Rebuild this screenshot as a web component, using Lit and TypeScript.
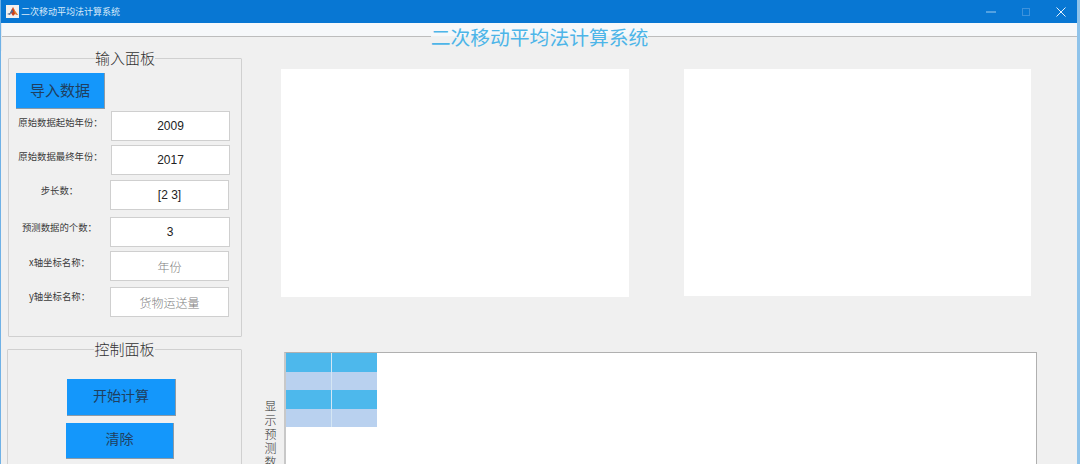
import { LitElement, html, css } from "lit";
import { customElement } from "lit/decorators.js";

const FIELDS = [
  { cls: "r1", label: "原始数据起始年份：", value: "2009", muted: false },
  { cls: "r2", label: "原始数据最终年份：", value: "2017", muted: false },
  { cls: "r3", label: "步长数：", value: "[2 3]", muted: false },
  { cls: "r4", label: "预测数据的个数：", value: "3", muted: false },
  { cls: "r5", label: "x轴坐标名称：", value: "年份", muted: true },
  { cls: "r6", label: "y轴坐标名称：", value: "货物运送量", muted: true },
];

@customElement("app-root")
export class AppRoot extends LitElement {
  static styles = css`
    :host {
      display: block;
      width: 1080px;
      height: 464px;
      overflow: hidden;
      background: #f0f0f0;
      font-family: "Liberation Sans", "Noto Sans CJK SC", sans-serif;
      color: #333;
    }
    .window {
      height: 464px;
      display: flex;
      flex-direction: column;
      border-left: 1px solid #6fb1e6;
      border-right: 3px solid #8fc3ea;
      box-sizing: border-box;
      overflow: hidden;
    }
    .titlebar {
      height: 23px;
      flex: none;
      margin: 0 -3px 0 -1px;
      background: #0877d3;
      display: flex;
      align-items: center;
      padding-left: 6px;
      color: #d8ebfa;
      font: 9px "Noto Sans CJK SC", sans-serif;
    }
    .app-icon {
      width: 13px;
      height: 13px;
      margin-right: 2px;
    }
    .controls {
      margin-left: auto;
      margin-right: 2px;
      display: flex;
      align-items: center;
    }
    .ctl {
      width: 35px;
      display: flex;
      justify-content: center;
    }
    .ctl svg {
      width: 10px;
      height: 10px;
      display: block;
    }
    .heading {
      height: 28px;
      flex: none;
      display: flex;
      align-items: center;
      background: linear-gradient(#f6f8fa 0 13px, #f0f0f0 13px);
      border-left: 1px solid #e4e9ee;
    }
    .rule {
      flex: 1;
      height: 1px;
      margin-bottom: 1px;
      background: #bdbdbd;
    }
    .heading h1 {
      margin: 0;
      font: 400 19.8px/28px "Noto Sans CJK SC", sans-serif;
      color: #4db5e8;
      white-space: nowrap;
    }
    .body {
      flex: 1;
      display: flex;
      min-height: 0;
      margin-top: -3px;
    }
    .left {
      width: 241px;
      flex: none;
      padding-left: 6px;
    }
    fieldset {
      box-sizing: border-box;
      margin: 0;
      padding: 0;
      min-width: 0;
      border: 1px solid #d0d0d0;
      border-radius: 1px;
    }
    legend {
      margin: 0 auto;
      padding: 0;
      font: 300 15px/20px "Noto Sans CJK SC", sans-serif;
      color: #333;
    }
    .input-panel {
      margin-left: 1px;
      width: 234px;
      height: 289px;
    }
    .control-panel {
      margin-top: 2px;
      width: 235px;
      height: 140px;
      display: flex;
      flex-direction: column;
    }
    .btn {
      box-sizing: border-box;
      display: flex;
      align-items: center;
      justify-content: center;
      background: #1497fb;
      border-bottom: 1px solid #8c9aa6;
      border-right: 1px solid #8c9aa6;
      font: 14px "Noto Sans CJK SC", sans-serif;
      color: #1f3f60;
      padding-bottom: 5px;
    }
    .import {
      width: 89px;
      height: 36px;
      margin: 5px 0 0 7px;
      font-size: 15px;
      padding-bottom: 2px;
    }
    .start {
      width: 109px;
      height: 37px;
      margin: 20px 0 0 59px;
    }
    .clear {
      width: 108px;
      height: 36px;
      margin: 7px 0 0 58px;
    }
    .row {
      display: flex;
      height: 30px;
      align-items: center;
    }
    .label {
      width: 101px;
      flex: none;
      text-align: center;
      font: 400 9.4px/12px "Noto Sans CJK SC", sans-serif;
      white-space: nowrap;
      padding-bottom: 8px;
      color: #3a3a3a;
    }
    .field {
      box-sizing: border-box;
      width: 119px;
      height: 30px;
      background: #fff;
      border: 1px solid #cfcfcf;
      display: flex;
      align-items: center;
      justify-content: center;
      font-size: 12px;
      color: #222;
    }
    .field.muted {
      color: #808080;
      font-family: "Noto Sans CJK SC", sans-serif;
      font-weight: 300;
    }
    .r1 { margin-top: 2px; margin-left: 1px; }
    .r2 { margin-top: 4px; margin-left: 1px; }
    .r3 { margin-top: 5px; }
    .r4 { margin-top: 7px; }
    .r5 { margin-top: 4px; }
    .r6 { margin-top: 6px; }
    .r3 .label { padding-bottom: 10px; }
    .r4 .label { padding-bottom: 11px; }
    .r4 .field { width: 120px; }
    .r6 .label { padding-bottom: 12px; }
    .right {
      flex: 1;
      min-width: 0;
    }
    .axes-row {
      display: flex;
      margin: 21px 0 0 33px;
      height: 228px;
      gap: 55px;
    }
    .axes {
      background: #fff;
      width: 348px;
      height: 228px;
    }
    .axes.second {
      width: 347px;
      height: 227px;
    }
    .table-row {
      display: flex;
      margin: 55px 0 0 12px;
    }
    .side {
      width: 21px;
      flex: none;
      padding: 48px 3px 0 0;
      writing-mode: vertical-rl;
      text-orientation: upright;
      font: 300 12px/21px "Noto Sans CJK SC", sans-serif;
      letter-spacing: 2px;
      color: #333;
      height: 120px;
    }
    .table {
      box-sizing: border-box;
      width: 753px;
      height: 140px;
      background: #fff;
      border-top: 1px solid #b0b0b0;
      border-right: 1px solid #b0b0b0;
      border-left: 2px solid #c8c8c8;
    }
    .grid {
      display: grid;
      grid-template-columns: 46px 45px;
      grid-auto-rows: 18.5px;
      width: 91px;
    }
    .cell {
      background: #4db8ec;
      border-right: 1px solid #d4e6f4;
    }
    .cell.alt {
      background: #b9d1ef;
    }
    .cell:nth-child(2n) {
      border-right: 0;
    }
  `;

  private cells() {
    const out = [];
    for (let r = 0; r < 4; r++) {
      for (let c = 0; c < 2; c++) {
        out.push(html`<div class="cell ${r % 2 ? "alt" : ""}"></div>`);
      }
    }
    return out;
  }

  render() {
    return html`
      <div class="window">
        <div class="titlebar">
          <svg class="app-icon" viewBox="0 0 13 13">
            <rect width="13" height="13" fill="#f4f1ee" />
            <path d="M1 9l3-1 2-4 1-2 2 4 3 4-3-1-2 2-2-3z" fill="#c9401f" />
            <path d="M1 9l3-1 2-4 1 3-2 1-1 2z" fill="#4a6f9c" />
            <path d="M7 2l2 4 3 4-3-1z" fill="#e8862c" />
          </svg>
          <span>二次移动平均法计算系统</span>
          <div class="controls">
            <div class="ctl">
              <svg viewBox="0 0 10 10"><path d="M0 5h10" stroke="#9dcdf0" fill="none" /></svg>
            </div>
            <div class="ctl">
              <svg viewBox="0 0 10 10"><rect x="1.5" y="1.5" width="7" height="7" stroke="#3d92dc" fill="none" /></svg>
            </div>
            <div class="ctl">
              <svg viewBox="0 0 10 10"><path d="M.5.5l9 9M9.5.5l-9 9" stroke="#e6f2fb" fill="none" /></svg>
            </div>
          </div>
        </div>
        <div class="heading">
          <div class="rule"></div>
          <h1>二次移动平均法计算系统</h1>
          <div class="rule"></div>
        </div>
        <div class="body">
          <div class="left">
            <fieldset class="input-panel">
              <legend>输入面板</legend>
              <div class="btn import">导入数据</div>
              ${FIELDS.map(
                (f) => html`
                  <div class="row ${f.cls}">
                    <div class="label">${f.label}</div>
                    <div class="field ${f.muted ? "muted" : ""}">${f.value}</div>
                  </div>
                `
              )}
            </fieldset>
            <fieldset class="control-panel">
              <legend>控制面板</legend>
              <div class="btn start">开始计算</div>
              <div class="btn clear">清除</div>
            </fieldset>
          </div>
          <div class="right">
            <div class="axes-row">
              <div class="axes"></div>
              <div class="axes second"></div>
            </div>
            <div class="table-row">
              <div class="side">显示预测数据</div>
              <div class="table">
                <div class="grid">${this.cells()}</div>
              </div>
            </div>
          </div>
        </div>
      </div>
    `;
  }
}
